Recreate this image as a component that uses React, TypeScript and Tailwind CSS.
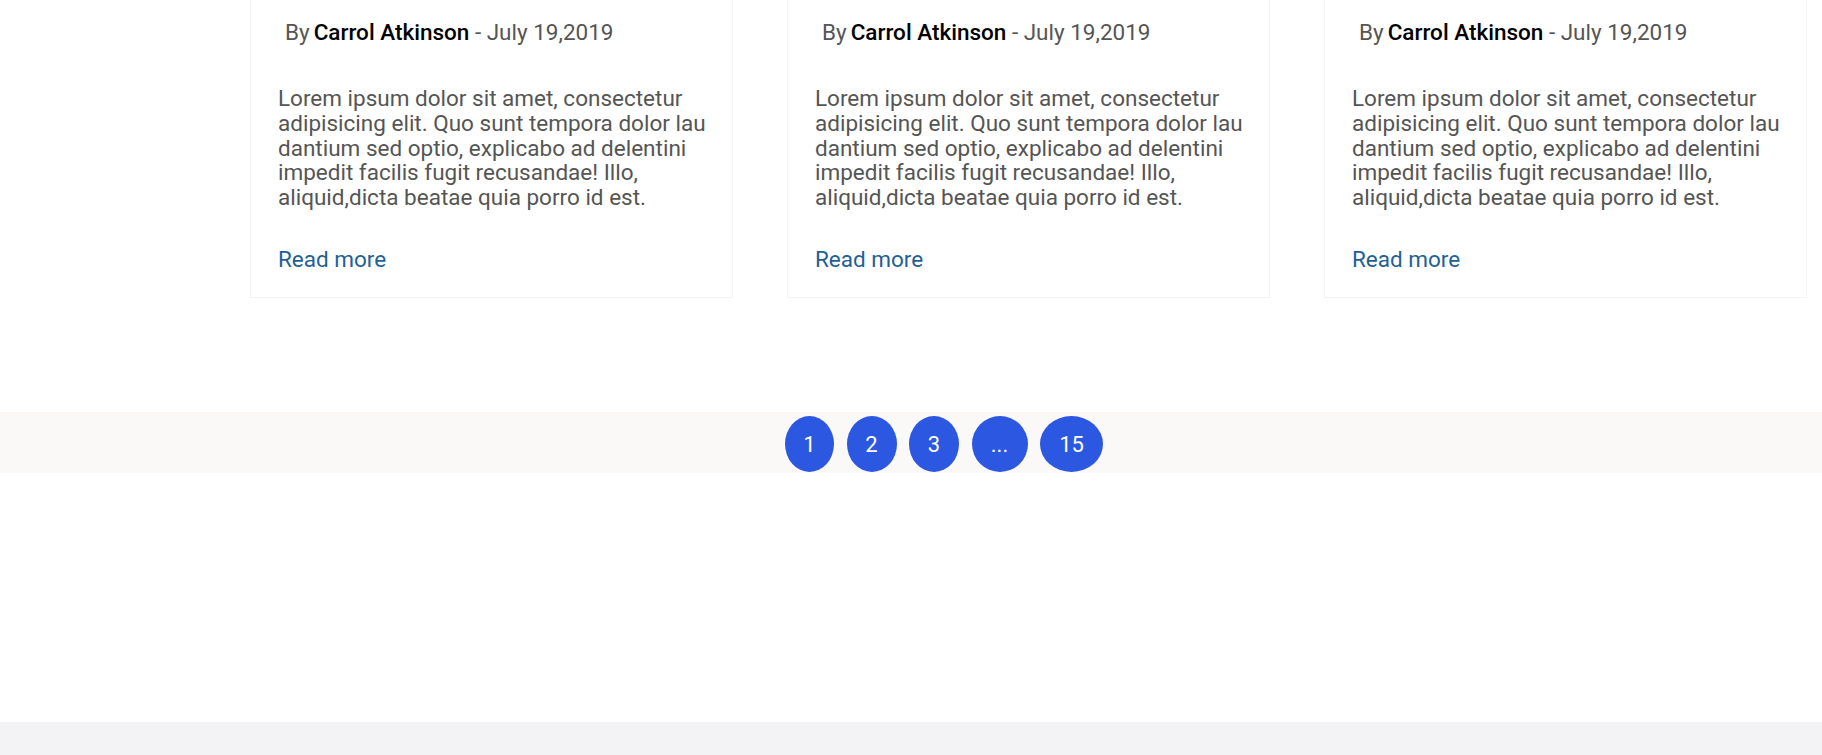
import React from "react";

const Card = () => (
  <div className="w-[483px] h-[330px] -mt-[32px] border border-[#f5f3f3] bg-white flex flex-col">
    <div className="pt-[48px] pl-[34px] text-[22.5px] leading-[30px] text-[#555]">
      By<span className="text-black font-medium ml-[4px]">Carrol Atkinson</span> - July 19,2019
    </div>
    <p className="mt-[39px] pl-[27px] pr-[10px] text-[22.5px] leading-[24.8px] text-[#555]">
      Lorem ipsum dolor sit amet, consectetur adipisicing elit. Quo sunt tempora dolor lau dantium sed optio, explicabo ad delentini impedit facilis fugit recusandae! Illo, aliquid,dicta beatae quia porro id est.
    </p>
    <a className="mt-[34px] pl-[27px] text-[22.5px] leading-[30px] text-[#1f6196]">Read more</a>
  </div>
);

export default function App() {
  const pages = [
    { label: "1", w: "w-[49px]" },
    { label: "2", w: "w-[50px]" },
    { label: "3", w: "w-[50px]" },
    { label: "...", w: "w-[56px]" },
    { label: "15", w: "w-[63px]" },
  ];
  return (
    <div className="w-full h-[755px] bg-white flex flex-col overflow-hidden" style={{ fontFamily: "Roboto, 'Liberation Sans', sans-serif" }}>
      <div className="flex pl-[250px] gap-[54px]">
        <Card />
        <Card />
        <Card />
      </div>
      <div className="mt-[114px] h-[61px] bg-[#faf9f8] flex items-start pl-[785px] gap-[12.5px] pt-[4px]">
        {pages.map((p) => (
          <div key={p.label} className={`${p.w} h-[56px] rounded-[50%] bg-[#2c57e0] text-white text-[22px] flex items-center justify-center`}>
            {p.label}
          </div>
        ))}
      </div>
      <div className="flex-1" />
      <div className="h-[33px] bg-[#f3f3f5]" />
    </div>
  );
}
